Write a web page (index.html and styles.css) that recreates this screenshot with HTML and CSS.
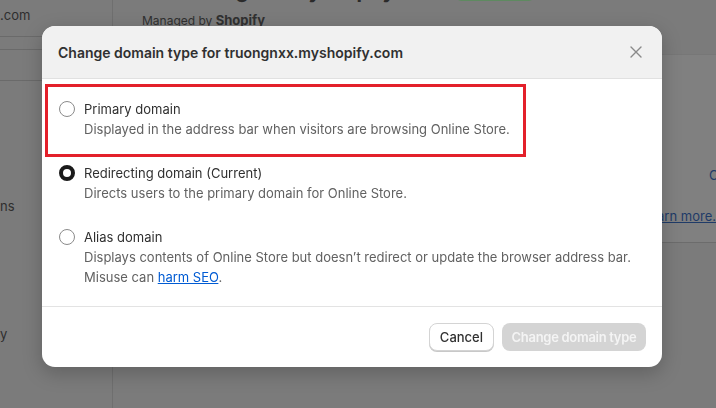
FILE: index.html
```html
<!DOCTYPE html>
<html lang="en">
<head>
    <meta charset="UTF-8">
    <meta name="viewport" content="width=device-width, initial-scale=1.0">
    <title>Change domain type</title>
    <link rel="stylesheet" href="styles.css">
</head>
<body>
    <div class="page">
        <aside class="sidebar">
            <div class="side-store">.com</div>
            <div class="side-sep"></div>
            <div class="side-sep second"></div>
            <div class="side-item first">ns</div>
            <div class="side-item last">y</div>
        </aside>
        <main class="main">
            <div class="main-head">
                <span class="head-icon"></span>
                <span class="head-title">truongnxx.myshopify.com</span>
                <span class="head-badge">Connected</span>
            </div>
            <div class="managed">Managed by <b>Shopify</b></div>
            <section class="card">
                <div class="card-row action">Change</div>
                <div class="card-row learn"><a href="#">Learn more.</a></div>
            </section>
        </main>
    </div>

    <div class="backdrop">
        <div class="modal">
            <div class="modal-header">
                <h2>Change domain type for truongnxx.myshopify.com</h2>
                <button class="close-btn" aria-label="Close">
                    <svg width="12" height="12" viewBox="0 0 12 12">
                        <path d="M1 1L11 11M11 1L1 11" stroke="#8a8a8a" stroke-width="1.4" stroke-linecap="round"/>
                    </svg>
                </button>
            </div>
            <div class="modal-body">
                <label class="option">
                    <span class="highlight"></span>
                    <span class="radio"></span>
                    <span class="option-text">
                        <span class="option-label">Primary domain</span>
                        <span class="option-desc">Displayed in the address bar when visitors are browsing Online Store.</span>
                    </span>
                </label>
                <label class="option">
                    <span class="radio checked"></span>
                    <span class="option-text">
                        <span class="option-label">Redirecting domain (Current)</span>
                        <span class="option-desc">Directs users to the primary domain for Online Store.</span>
                    </span>
                </label>
                <label class="option">
                    <span class="radio"></span>
                    <span class="option-text">
                        <span class="option-label">Alias domain</span>
                        <span class="option-desc">Displays contents of Online Store but doesn’t redirect or update the browser address bar. Misuse can <a href="#">harm SEO</a>.</span>
                    </span>
                </label>
            </div>
            <div class="modal-footer">
                <button class="btn cancel">Cancel</button>
                <button class="btn primary" disabled>Change domain type</button>
            </div>
        </div>
    </div>
</body>
</html>
```

FILE: styles.css
```css
* {
    margin: 0;
    padding: 0;
    box-sizing: border-box;
}

body {
    width: 716px;
    height: 408px;
    overflow: hidden;
    background: #7b7b7b;
    font-family: Inter, "Noto Sans", sans-serif;
    font-size: 13px;
    color: #303030;
}

/* dimmed page behind the modal */

.page {
    display: flex;
    height: 408px;
}

.sidebar {
    width: 113px;
    border-right: 1px solid #6f6f6f;
    color: #2e2e2e;
    font-size: 13px;
}

.side-store {
    height: 37px;
    padding-top: 7px;
    border-bottom: 1px solid #6a6a6a;
}

.side-sep {
    height: 13px;
    border-bottom: 1px solid #6a6a6a;
}

.side-sep.second {
    height: 31px;
}

.side-item.first {
    margin-top: 117px;
}

.side-item.last {
    margin-top: 112px;
}

.main {
    flex: 1;
    padding-left: 29px;
    overflow: hidden;
}

.main-head {
    display: flex;
    align-items: center;
    height: 16px;
    margin-top: -17px;
    white-space: nowrap;
}

.head-icon {
    width: 10px;
    height: 12px;
    border: 2px solid #2e2e2e;
    border-radius: 2px;
    margin-left: 2px;
    margin-right: 29px;
}

.head-title {
    font-size: 20px;
    font-weight: 700;
    color: #2a2a2a;
}

.head-badge {
    margin-left: 11px;
    padding: 2px 10px;
    border-radius: 8px;
    background: #5e8a60;
    color: #5e8a60;
    font-size: 12px;
}

.managed {
    margin-top: 13px;
    font-size: 12px;
    color: #303030;
}

.managed b {
    font-size: 13px;
    font-weight: 700;
}

.card {
    margin-top: 26px;
    height: 189px;
    background: #808080;
    border-top: 1px solid #777;
    border-bottom: 1px solid #6c6c6c;
    white-space: nowrap;
}

.card-row.action {
    margin-top: 112px;
    padding-left: 567px;
    color: #1f3b68;
}

.card-row.learn {
    margin-top: 25px;
    padding-left: 500px;
}

.card-row a {
    color: #1f3b68;
}

/* modal */

.backdrop {
    position: fixed;
    inset: 0;
    padding: 26px 0 0 42px;
}

.modal {
    width: 620px;
    background: #fff;
    border-radius: 13px;
    overflow: hidden;
    box-shadow: 0 6px 20px rgba(0, 0, 0, 0.22);
}

.modal-header {
    display: flex;
    align-items: center;
    justify-content: space-between;
    height: 53px;
    padding: 0 18px 0 16px;
    background: #f1f1f1;
    border-bottom: 1px solid #e1e1e1;
}

.modal-header h2 {
    font-size: 14px;
    font-weight: 600;
    color: #303030;
}

.close-btn {
    display: flex;
    width: 16px;
    height: 16px;
    align-items: center;
    justify-content: center;
    border: none;
    background: none;
}

.modal-body {
    display: flex;
    flex-direction: column;
    gap: 24px;
    padding: 20px 16px 19px 17px;
    border-bottom: 1px solid #e3e3e3;
}

.option {
    position: relative;
    display: flex;
    gap: 9px;
}

.highlight {
    position: absolute;
    left: -14px;
    top: -15px;
    width: 481px;
    height: 73px;
    border: 3px solid #e3202a;
}

.radio {
    flex: none;
    width: 16px;
    height: 16px;
    margin-top: 2px;
    border: 1px solid #8a8a8a;
    border-radius: 50%;
    background: #fff;
}

.radio.checked {
    border: 4px solid #1a1a1a;
}

.option-text {
    display: flex;
    flex-direction: column;
    line-height: 20px;
}

.option-desc {
    color: #616161;
}

.option-desc a {
    color: #005bd3;
}

.modal-footer {
    display: flex;
    justify-content: flex-end;
    gap: 8px;
    padding: 16px;
}

.btn {
    height: 28px;
    padding: 0 10px;
    border-radius: 8px;
    font-family: Inter, "Noto Sans", sans-serif;
    font-size: 13px;
    white-space: nowrap;
}

.btn.cancel {
    background: #fff;
    border: 1px solid #d4d4d4;
    box-shadow: 0 1px 0 #c8c8c8;
    color: #303030;
    font-weight: 450;
}

.btn.primary {
    width: 144px;
    padding: 0;
    background: #d4d4d4;
    border: none;
    color: #f4f4f4;
    font-weight: 600;
    letter-spacing: -0.3px;
}
```
